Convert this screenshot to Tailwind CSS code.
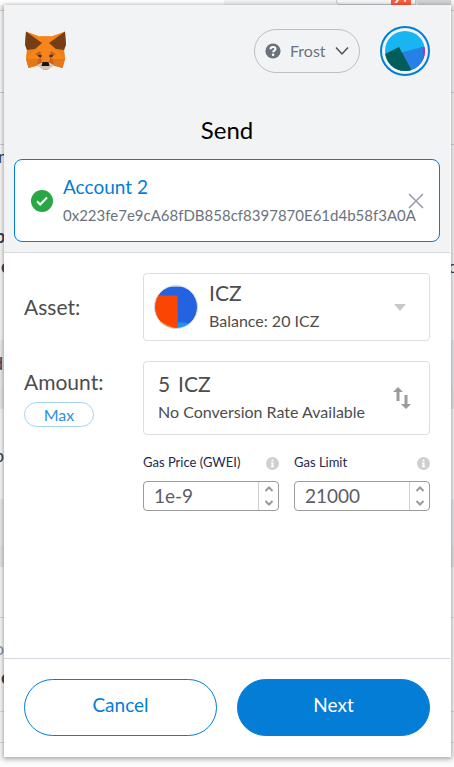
<!DOCTYPE html>
<html lang="en">
<head>
<meta charset="utf-8">
<meta name="viewport" content="width=device-width, initial-scale=1">
<title>Send</title>
<script src="https://cdn.jsdelivr.net/npm/@tailwindcss/browser@4"></script>
</head>
<body class="relative flex min-h-screen flex-col overflow-x-hidden bg-[#fbfbfb] pt-[5px] pr-[3px] pb-[10px] pl-[4px] font-['Lato','Noto_Sans',sans-serif] text-[#4d4d4d]">

<!-- Page behind the popup -->
<div aria-hidden="true" class="absolute inset-0 overflow-hidden text-lg leading-5 text-[#3c4650]">
  <div class="absolute inset-x-0 top-0 h-[11px] border-b border-[#d5d5d5] bg-[#f4f4f4]"></div>
  <div class="absolute top-0 left-0 h-[5px] w-[224px] bg-white"></div>
  <div class="absolute -top-3 left-[336px] h-[17px] w-[80px] rounded-bl border border-[#c9c9c9] bg-[#f8f8f8]"></div>
  <div class="absolute -top-3 left-[391px] h-[18px] w-[20px] bg-[#ff5c39] text-center text-sm leading-5 font-bold text-white">9+</div>
  <div class="absolute top-0 left-[416px] h-[5px] w-[35px] rounded-bl bg-[#d5d5d5]"></div>
  <div class="absolute inset-x-0 top-[92px] h-[53px] border-y border-[#cdd4da]"></div>
  <div class="absolute inset-x-0 top-[340px] h-[48px] bg-[#eceef0]"></div>
  <div class="absolute inset-x-0 top-[388px] h-[21px] bg-[#eaeaea]"></div>
  <div class="absolute inset-x-0 top-[499px] h-[47px] bg-[#eceef0]"></div>
  <div class="absolute inset-x-0 top-[546px] h-[21px] bg-[#e8e8e8]"></div>
  <div class="absolute inset-x-0 top-[617px] h-px bg-[#dcdcdc]"></div>
  <div class="absolute inset-x-0 top-[711px] h-[32px] border-y border-[#dcdcdc]"></div>
  <span class="absolute top-[146px] left-[-2px]">n</span>
  <span class="absolute top-[226px] left-[-5px] font-bold">p</span>
  <span class="absolute top-[256px] left-[1px] font-bold">e</span>
  <span class="absolute top-[353px] left-[-7px]">d</span>
  <span class="absolute top-[445px] left-[-6px]">p</span>
  <span class="absolute top-[638px] left-[-6px] text-[#8797a5]">o</span>
  <span class="absolute top-[667px] left-[1px] font-bold">e</span>
  <span class="absolute top-[256px] left-[448px]">o</span>
</div>

<main class="relative flex flex-1 flex-col bg-white pr-px shadow-[0_1px_5px_1px_rgba(0,0,0,0.35)]">
  <header class="border-b border-[#d6d9dc] bg-[#f2f3f4] pt-[21px] pb-[10px]">
    <div class="flex items-center px-5">
      <svg class="h-[42px] w-[42px]" viewBox="0 0 42 42" role="img" aria-label="MetaMask">
        <path fill="#f6851b" d="M2 1.500 16 6.500h11L41 1.500l1 13-2 6 1 8.500-2.500 9-9.500-2.500-1 1-5 3.500h-3l-5-3.500-1-1L4.500 38 2 29l1-8.500-2-6z"/>
        <path fill="#e8801f" d="M16 6.500 18 13 11 19 3 20.500 2 29h12l-3-8 7-8h7l7 8-3 8h12l-1-8.500-8-1.500-7-6 2-6.500z"/>
        <path fill="#f6851b" d="M16 6.500h11L25 13l1 9-2 10h-5l-2-10 1-9z"/>
        <path fill="#763d16" d="M2 1.500 18 13 11 19 3 20 1 14.500zM41 1.500 25 13l7 6 8 1 2-5.500z"/>
        <path fill="#f6851b" d="M2 29 11 19l4 9-1 1zM41 29l-9-10-4 9 1 1z"/>
        <path fill="#e4761b" d="M2 29h12l-1 6.500L4.500 38zM41 29H29l1 6.500 8.500 2.500z"/>
        <path fill="#cd6116" d="m11 24 5-3 2 5-2 2zM32 24l-5-3-2 5 2 2zM14 29l3-1 1 5-5 2zM29 29l-3-1-1 5 5 2z"/>
        <path fill="#233447" d="m14 24.500 4 1-1 2-2.500-1zM29 24.500l-4 1 1 2 2.500-1z"/>
        <path fill="#d7c1b3" d="m13 35 5-2.500h7l5 2.500-5.500 4.500h-6z"/>
        <path fill="#161616" d="M18.500 32h6l1 4h-8z"/>
      </svg>
      <button type="button" class="ml-auto flex h-11 w-[106px] items-center rounded-full border border-[#bbc0c5] pl-[10px] text-base text-[#6a737d]">
        <svg class="mr-[9px] h-4 w-4 shrink-0" viewBox="0 0 16 16" aria-hidden="true"><circle cx="8" cy="8" r="7.6" fill="#6a737d"/><path d="M5.500 6.200C5.500 4.700 6.600 4 8 4s2.500.8 2.500 2.100c0 1.500-2.400 1.500-2.400 3.200" fill="none" stroke="#fff" stroke-width="2"/><circle cx="8.100" cy="11.700" r="1.300" fill="#fff"/></svg>
        Frost
        <svg class="mr-[10px] ml-auto h-[10px] w-[14px]" viewBox="0 0 14 10" fill="none" stroke="#4a5056" stroke-width="1.500" aria-hidden="true"><path d="M1 1.500 7 8l6-6.500"/></svg>
      </button>
      <button type="button" aria-label="My accounts" class="ml-5 h-[50px] w-[50px] rounded-full border-2 border-[#037dd6] p-[3px]">
        <svg class="h-10 w-10" viewBox="0 0 40 40" aria-hidden="true">
          <clipPath id="avatar"><circle cx="20" cy="20" r="20"/></clipPath>
          <g clip-path="url(#avatar)"><path fill="#18b5f1" d="M0 0h40v40H0z"/><path fill="#f5128c" d="M36 16h4v14h-4z"/><path fill="#2680e5" d="M14 22 38 16l1 24H22z"/><path fill="#035e5b" d="M0 23 14 16l13 24H0z"/></g>
        </svg>
      </button>
    </div>
    <h1 class="mt-10 text-center text-2xl leading-7 text-black">Send</h1>
    <div class="mx-[10px] mt-[15px] flex h-[83px] items-center rounded-lg border border-[#037dd6] bg-white pl-4">
      <svg class="h-[22px] w-[22px] shrink-0" viewBox="0 0 22 22" role="img" aria-label="Valid recipient"><circle cx="11" cy="11" r="11" fill="#28a745"/><path d="M6 11.300 9.200 14.500 16 7.500" fill="none" stroke="#fff" stroke-width="2"/></svg>
      <div class="ml-[10px] min-w-0 flex-1">
        <div class="text-[19px] leading-6 text-[#037dd6]">Account 2</div>
        <div class="mt-1 text-[15px] leading-6 whitespace-nowrap text-[#6a737d]">0x223fe7e9cA68fDB858cf8397870E61d4b58f3A0A</div>
      </div>
      <button type="button" aria-label="Remove recipient" class="mr-[15px] shrink-0">
        <svg class="h-4 w-4" viewBox="0 0 16 16" stroke="#9b9fae" stroke-width="1.700" aria-hidden="true"><path d="m1 1 14 14M15 1 1 15"/></svg>
      </button>
    </div>
  </header>

  <form class="flex flex-1 flex-col">
    <div class="flex flex-1 flex-col gap-5 px-5 pt-5">
      <div class="flex items-center">
        <span id="asset" class="w-[119px] shrink-0 text-[21px] leading-7">Asset:</span>
        <button type="button" aria-labelledby="asset asset-name" aria-haspopup="listbox" class="flex h-[68px] flex-1 items-center rounded border border-[#dedede] pr-[23px] pl-[10px] text-left">
          <svg class="h-11 w-11" viewBox="0 0 44 44" aria-hidden="true">
            <clipPath id="token"><circle cx="22" cy="22" r="21.500"/></clipPath>
            <g clip-path="url(#token)"><path fill="#fff" d="M0 0h44v44H0z"/><path fill="#2362e1" d="M0 1.500h44V44H0z"/><path fill="#1c94f2" d="M23 37 44 39v5H23z"/><path fill="#fb4502" d="M0 10.500h23.500L24 44H0z"/><path fill="#fc7500" d="M4 35 22 44H4z"/></g>
            <circle cx="22" cy="22" r="21.500" fill="none" stroke="#d9dce2"/>
          </svg>
          <span class="ml-[11px]">
            <span id="asset-name" class="block text-[21px] leading-6">ICZ</span>
            <span class="mt-1 block text-base leading-6">Balance: 20 ICZ</span>
          </span>
          <svg class="ml-auto h-[7px] w-3" viewBox="0 0 12 7" fill="#c8c8c8" aria-hidden="true"><path d="M0 0h12L6 7z"/></svg>
        </button>
      </div>

      <div class="flex">
        <div class="w-[119px] shrink-0 pt-[7px]">
          <label for="amount" class="block text-[21px] leading-7">Amount:</label>
          <button type="button" class="mt-[6px] h-[25px] w-[70px] rounded-full border border-[#a9d3f2] text-base leading-5 text-[#2f8fdc]">Max</button>
        </div>
        <div class="flex h-[74px] flex-1 items-center rounded border border-[#dedede] pr-[18px] pl-[14px]">
          <div>
            <div class="flex text-[21px] leading-6"><input id="amount" value="5" class="mr-2 w-3 leading-6 outline-none"><span>ICZ</span></div>
            <div class="mt-1 text-base leading-6">No Conversion Rate Available</div>
          </div>
          <button type="button" aria-label="Switch currency" class="ml-auto">
            <svg class="h-[22px] w-[18px]" viewBox="0 0 18 22" aria-hidden="true"><path fill="#9b9b9b" d="M5 0 10 5H6.500v9h-3V5H0zM13 22 8 17h3.500V8h3v9H18z"/></svg>
          </button>
        </div>
      </div>

      <div class="grid grid-cols-2 gap-[15px] pl-[119px] text-[#23284d]">
        <div>
          <div class="flex h-4 items-center justify-between text-[13px]"><label for="price">Gas Price (GWEI)</label>
            <svg class="h-[13px] w-[13px]" viewBox="0 0 13 13" aria-hidden="true"><circle cx="6.500" cy="6.500" r="6.500" fill="#cfcfcf"/><path fill="#fff" d="M5.500 2.500h2v1.700h-2zM5 5.300h2.500v3.700h.7v1.200H4.800V9h.7V6.500H5z"/></svg></div>
          <div class="mt-[10px] flex h-[30px] rounded border border-[#9b9b9b]">
            <input id="price" value="1e-9" inputmode="decimal" class="min-w-0 flex-1 bg-transparent pl-[10px] text-[19px] text-[#5b5d67] outline-none">
            <div class="flex w-5 flex-col rounded-r border-l border-[#d0d0d0]">
              <button type="button" aria-label="Increase gas price" class="flex flex-1 items-center justify-center"><svg class="h-[6px] w-2" viewBox="0 0 8 6" fill="none" stroke="#9b9b9b" stroke-width="2" aria-hidden="true"><path d="m.5 5L4 1.500 7.500 5"/></svg></button>
              <button type="button" aria-label="Decrease gas price" class="flex flex-1 items-center justify-center"><svg class="h-[6px] w-2" viewBox="0 0 8 6" fill="none" stroke="#9b9b9b" stroke-width="2" aria-hidden="true"><path d="m.5 1L4 4.500 7.500 1"/></svg></button>
            </div>
          </div>
        </div>
        <div>
          <div class="flex h-4 items-center justify-between text-[13px]"><label for="limit">Gas Limit</label>
            <svg class="h-[13px] w-[13px]" viewBox="0 0 13 13" aria-hidden="true"><circle cx="6.500" cy="6.500" r="6.500" fill="#cfcfcf"/><path fill="#fff" d="M5.500 2.500h2v1.700h-2zM5 5.300h2.500v3.700h.7v1.200H4.800V9h.7V6.500H5z"/></svg></div>
          <div class="mt-[10px] flex h-[30px] rounded border border-[#9b9b9b]">
            <input id="limit" value="21000" inputmode="numeric" class="min-w-0 flex-1 bg-transparent pl-[10px] text-[19px] text-[#5b5d67] outline-none">
            <div class="flex w-5 flex-col rounded-r border-l border-[#d0d0d0]">
              <button type="button" aria-label="Increase gas limit" class="flex flex-1 items-center justify-center"><svg class="h-[6px] w-2" viewBox="0 0 8 6" fill="none" stroke="#9b9b9b" stroke-width="2" aria-hidden="true"><path d="m.5 5L4 1.500 7.500 5"/></svg></button>
              <button type="button" aria-label="Decrease gas limit" class="flex flex-1 items-center justify-center"><svg class="h-[6px] w-2" viewBox="0 0 8 6" fill="none" stroke="#9b9b9b" stroke-width="2" aria-hidden="true"><path d="m.5 1L4 4.500 7.500 1"/></svg></button>
            </div>
          </div>
        </div>
      </div>
    </div>

    <footer class="flex gap-5 border-t border-[#d2d8dd] px-5 pt-5 pb-[21px] text-[19px]">
      <button type="button" class="h-[57px] flex-1 rounded-full border border-[#037dd6] pb-1 text-[#037dd6]">Cancel</button>
      <button type="submit" class="h-[57px] flex-1 rounded-full border border-[#037dd6] bg-[#037dd6] pb-1 text-white">Next</button>
    </footer>
  </form>
</main>
</body>
</html>
